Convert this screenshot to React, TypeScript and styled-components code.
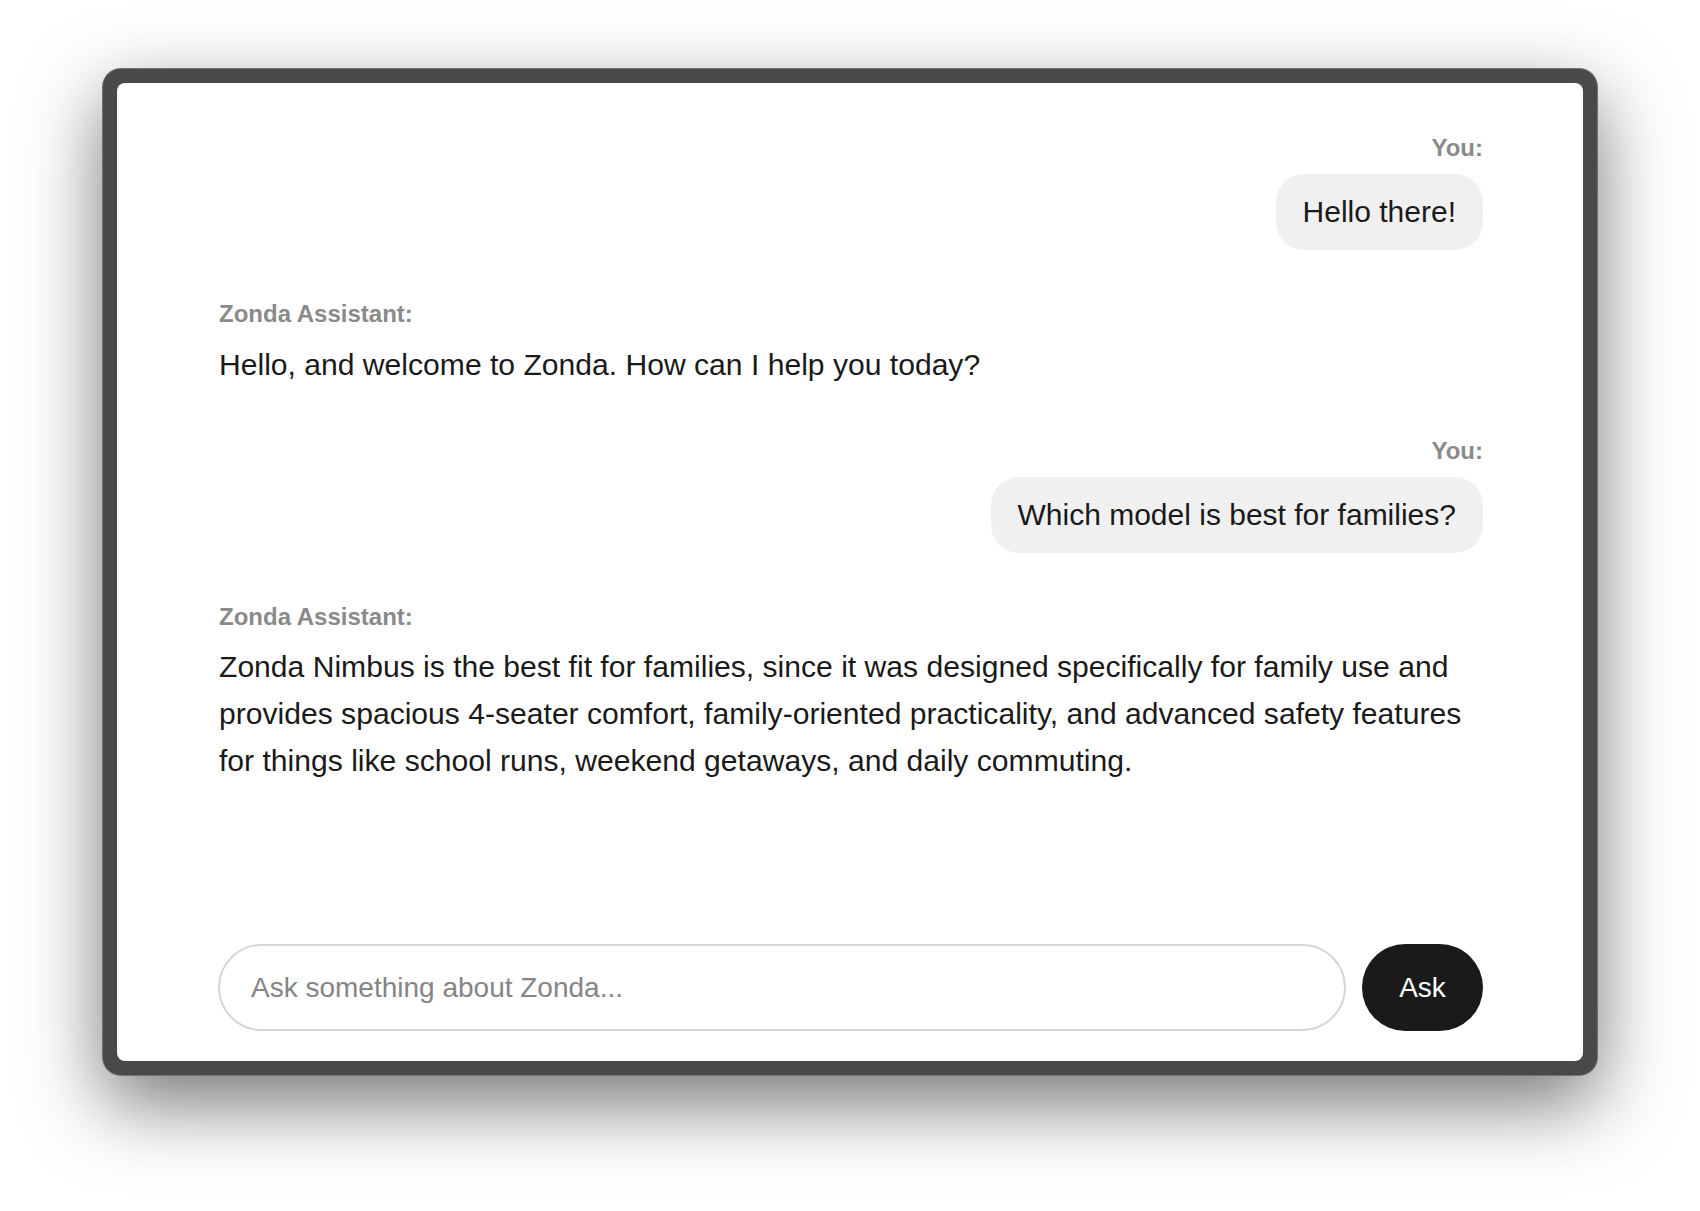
import React from 'react';
import styled, { createGlobalStyle } from 'styled-components';

type Message = {
  from: 'user' | 'assistant';
  text: string;
};

const messages: Message[] = [
  { from: 'user', text: 'Hello there!' },
  { from: 'assistant', text: 'Hello, and welcome to Zonda. How can I help you today?' },
  { from: 'user', text: 'Which model is best for families?' },
  {
    from: 'assistant',
    text:
      'Zonda Nimbus is the best fit for families, since it was designed specifically for family use and provides spacious 4-seater comfort, family-oriented practicality, and advanced safety features for things like school runs, weekend getaways, and daily commuting.',
  },
];

const GlobalStyle = createGlobalStyle`
  * {
    box-sizing: border-box;
  }

  body {
    margin: 0;
    background: #ffffff;
    font-family: "Liberation Sans", Helvetica, Arial, sans-serif;
    color: #1a1a1a;
  }
`;

const Page = styled.div`
  width: 1700px;
  height: 1211px;
  padding: 69px 103px 0;
  overflow: hidden;
`;

const Frame = styled.div`
  height: 1006px;
  padding: 14px;
  background: #4a484b;
  border-radius: 18px;
  box-shadow: 0 0 0 1px #737274, 0 28px 78px rgba(0, 0, 0, 0.55);
`;

const Screen = styled.div`
  height: 100%;
  display: flex;
  flex-direction: column;
  background: #ffffff;
  border-radius: 8px;
  padding: 0 100px 30px 101px;
`;

const Thread = styled.div`
  flex: 1;
  display: flex;
  flex-direction: column;
  gap: 50px;
  padding: 51px 0 0 1px;
`;

const Entry = styled.div<{ $mine: boolean }>`
  display: flex;
  flex-direction: column;
  align-items: ${p => (p.$mine ? 'flex-end' : 'flex-start')};
`;

const Sender = styled.div`
  font-size: 24px;
  line-height: 28.8px;
  font-weight: 700;
  color: #8a8a8a;
  margin-bottom: 11px;
`;

const Bubble = styled.div`
  font-size: 30px;
  line-height: 36px;
  padding: 20px 27px;
  background: #f0f0f0;
  border-radius: 28px;
  color: #1a1a1a;
`;

const Reply = styled.p`
  margin: 2px 0 -1.5px;
  font-size: 30.1px;
  line-height: 46.7px;
  color: #1a1a1a;
`;

const Composer = styled.form`
  display: flex;
  gap: 16px;
  height: 87px;
`;

const Field = styled.input`
  flex: 1;
  height: 100%;
  padding: 0 31px;
  border: 2px solid #d6d6d6;
  border-radius: 999px;
  font-family: inherit;
  font-size: 28px;
  color: #1a1a1a;
  outline: none;

  &::placeholder {
    color: #858585;
  }
`;

const AskButton = styled.button`
  width: 121px;
  height: 100%;
  border: none;
  border-radius: 999px;
  background: #1a1a1a;
  color: #ffffff;
  font-family: inherit;
  font-size: 28px;
  cursor: pointer;
`;

const App: React.FC = () => {
  return (
    <>
      <GlobalStyle />
      <Page>
        <Frame>
          <Screen>
            <Thread>
              {messages.map((m, i) => (
                <Entry key={i} $mine={m.from === 'user'}>
                  <Sender>{m.from === 'user' ? 'You:' : 'Zonda Assistant:'}</Sender>
                  {m.from === 'user' ? <Bubble>{m.text}</Bubble> : <Reply>{m.text}</Reply>}
                </Entry>
              ))}
            </Thread>
            <Composer onSubmit={e => e.preventDefault()}>
              <Field placeholder="Ask something about Zonda..." />
              <AskButton type="submit">Ask</AskButton>
            </Composer>
          </Screen>
        </Frame>
      </Page>
    </>
  );
};

export default App;
